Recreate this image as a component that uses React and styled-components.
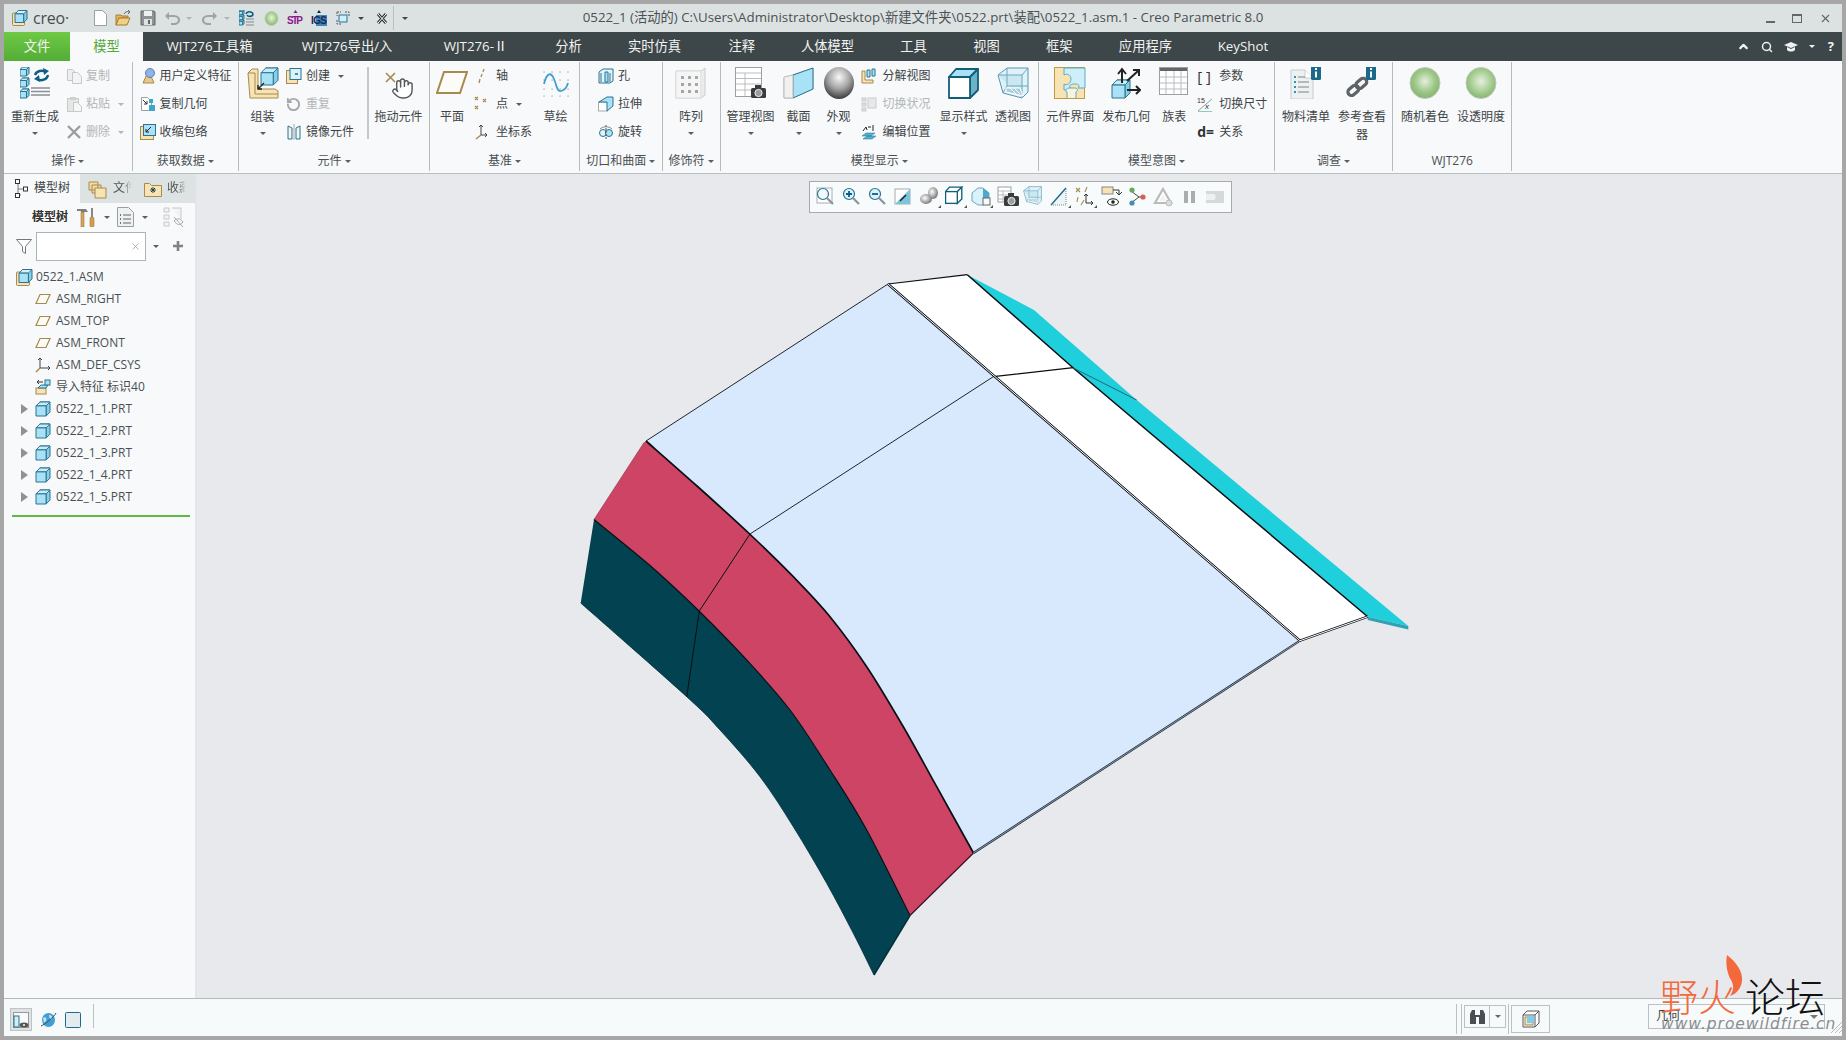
import React from 'react';
import styled, { createGlobalStyle } from 'styled-components';
import { Hand, RotateCcw, Search, X, ChevronUp } from 'lucide-react';

const FONT = '"Open Sans","Noto Sans CJK SC",sans-serif';
const CY = '#a9e2f6', BL = '#2b7390', TN = '#f7e3b3', TL = '#a8894e', DK = '#3e4446';

const Global = createGlobalStyle`
  html, body { margin: 0; background: #a6a6a6; overflow: hidden; }
  #root { width: 1846px; height: 1040px; }
`;

const Win = styled.div`
  position: relative; box-sizing: border-box; margin: 4px 0 0 4px; width: 1838px; height: 1032px;
  display: flex; flex-direction: column; font: 12px/1.2 ${FONT}; color: ${DK}; background: #f7f9fb; overflow: hidden;
`;
/* ---------- title bar ---------- */
const TitleBar = styled.header`
  height: 28px; flex: none; background: #dce2e2; display: grid; grid-template-columns: 1fr auto 1fr; align-items: center;
`;
const Quick = styled.div`display: flex; align-items: center; padding-left: 8px;`;
const Creo = styled.span`font: 16px/1 "Open Sans", ${FONT}; color: #474d4f; margin-left: 5px; width: 36px; white-space: nowrap; letter-spacing: -.2px;`;
const QSlot = styled.span`display: flex; align-items: center; justify-content: center; flex: none; margin-left: ${p => p.$ml}px; width: ${p => p.$w}px;`;
const QSep = styled.span`display: block; width: 1px; height: 24px; background: #b9bfc0;`;
const Title = styled.div`font-size: 13.3px; color: #4a5052; white-space: nowrap;`;
const WinBtns = styled.div`display: flex; justify-content: flex-end; align-items: center; gap: 17px; padding-right: 10px; color: #555;`;
const MinMark = styled.span`display: block; width: 9px; height: 2px; background: #666; margin-top: 8px;`;
const MaxMark = styled.span`display: block; box-sizing: border-box; width: 10px; height: 9px; border: 1px solid #666; border-top-width: 2px;`;

/* ---------- tabs ---------- */
const TabBar = styled.nav`height: 29px; flex: none; background: #3d4648; display: flex; align-items: stretch;`;
const Tab = styled.div`
  flex: none; width: ${p => p.$w}px; display: flex; align-items: center; justify-content: center; font-size: 13.3px; white-space: nowrap;
  color: ${p => p.$kind === 'active' ? '#57a83a' : '#f2f4f4'};
  background: ${p => p.$kind === 'file' ? 'linear-gradient(#6fc944,#53ad37)' : p.$kind === 'active' ? '#f7f9fb' : 'transparent'};
`;
const TabTools = styled.div`margin-left: auto; display: flex; align-items: center; gap: 11px; padding-right: 8px; color: #f0f2f2;`;
const Help = styled.span`font-weight: 700; font-size: 13px; margin-left: 2px;`;

/* ---------- ribbon ---------- */
const Ribbon = styled.section`box-sizing: border-box; height: 113px; flex: none; display: flex; padding: 1px 0 2px; background: #f7f9fb; border-bottom: 1px solid #b8bfc0;`;
const Group = styled.div`box-sizing: border-box; flex: none; width: ${p => p.$w}px; display: flex; flex-direction: column; border-right: 1px solid #b7bbbc;`;
const GroupBody = styled.div`height: 90px; display: flex; padding-left: ${p => p.$pl || 0}px;`;
const GroupFoot = styled.div`height: 18px; display: flex; align-items: center; justify-content: center; gap: 3px; white-space: nowrap; color: #4a5052;`;
const Big = styled.div`flex: none; box-sizing: content-box; width: ${p => p.$w}px; display: flex; flex-direction: column; align-items: center; ${p => p.$sep ? 'border-left: 2px solid #c4c8c9; margin-top: 5px; height: 72px;' : ''}`;
const BigIcon = styled.div`height: ${p => p.$h || 41}px; padding-top: 5px; flex: none; display: flex; justify-content: center;`;
const BigLabel = styled.div`line-height: 18px; text-align: center; white-space: nowrap;`;
const SmallCol = styled.div`flex: none; width: ${p => p.$w}px; display: flex; flex-direction: column;`;
const SmallRow = styled.div`height: 28px; display: flex; align-items: center; white-space: nowrap; color: ${p => p.$off ? '#b2b6b8' : DK};`;
const SmallIcon = styled.span`flex: none; width: ${p => p.$w || 20}px; display: flex; align-items: center;`;
const Caret = styled.span`
  display: inline-block; flex: none; width: 0; height: 0; border-left: ${p => p.$s || 3.5}px solid transparent; border-right: ${p => p.$s || 3.5}px solid transparent;
  border-top: ${p => p.$s || 3.5}px solid ${p => p.$c || '#5a6062'}; margin-left: ${p => p.$ml || 0}px;
`;
const BigCaret = styled(Caret)`margin-top: 6px;`;
const SymText = styled.span`font-weight: ${p => p.$wt || 700}; font-size: ${p => p.$s || 13}px; color: #333; line-height: 1;`;

/* ---------- main ---------- */
const Main = styled.main`flex: 1; display: flex; min-height: 0;`;
const Side = styled.aside`box-sizing: border-box; flex: none; width: 193px; background: #f7f9fa; border-right: 2px solid #e3e6e7; display: flex; flex-direction: column;`;
const SideTabs = styled.div`height: 29px; flex: none; display: flex; background: #dde3e3;`;
const SideTab = styled.div`
  box-sizing: border-box; flex: none; width: ${p => p.$w}px; display: flex; align-items: center; gap: 5px; padding-left: ${p => p.$pl}px; white-space: nowrap;
  background: ${p => p.$on ? '#f7f9fa' : 'transparent'};
`;
const FadeText = styled.span`color: #555; -webkit-mask-image: linear-gradient(90deg,#000 50%,transparent 95%); mask-image: linear-gradient(90deg,#000 50%,transparent 95%); width: 20px;`;
const SideTools = styled.div`height: 28px; flex: none; display: flex; align-items: center; padding-left: 28px; gap: 7px; font-weight: 500;`;
const ToolLabel = styled.span`width: 38px; color: #333; text-shadow: 0 0 .4px #555;`;
const HideIcon = styled.svg`margin-left: 8px;`;
const FilterRow = styled.div`height: 30px; flex: none; display: flex; align-items: center; padding-left: 12px;`;
const FilterBox = styled.div`box-sizing: border-box; width: 110px; height: 29px; margin-left: 4px; background: #fff; border: 1px solid #aeb3b5; display: flex; align-items: center; justify-content: flex-end; padding-right: 4px; color: #999;`;
const PlusIcon = styled.svg`margin-left: 13px;`;
const Tree = styled.div`padding-top: 5px;`;
const Row = styled.div`height: 22px; display: flex; align-items: center; padding-left: ${p => p.$in}px; color: #4a5052; white-space: nowrap;`;
const Expand = styled.span`flex: none; width: 0; height: 0; border-left: 7px solid #8d9294; border-top: 5px solid transparent; border-bottom: 5px solid transparent; margin-right: 7px;`;
const RowIcon = styled.span`flex: none; display: flex; width: ${p => p.$w}px; margin-right: ${p => p.$g}px;`;
const GreenRule = styled.div`height: 2px; width: 178px; margin: 7px 0 0 8px; background: #62b845;`;

const Canvas = styled.div`position: relative; flex: 1; background: #e8e9ed; overflow: hidden;`;
const Model = styled.svg`position: absolute; inset: 0; width: 100%; height: 100%;`;
const Float = styled.div`
  position: absolute; top: 7px; left: 612px; box-sizing: border-box; height: 32px; display: flex; align-items: center; padding: 0 3px 0 4px; gap: 2px;
  background: #f8fbfc; border: 1px solid #a9a9a9;
`;
const FloatBtn = styled.span`flex: none; width: 24px; height: 24px; display: flex; align-items: center; justify-content: center;`;

/* ---------- status ---------- */
const Status = styled.footer`box-sizing: border-box; height: 38px; flex: none; background: #f7fafb; border-top: 1px solid #b5b9ba; display: flex; align-items: flex-start; padding: 5px 0 0 6px;`;
const StatBtn = styled.span`box-sizing: border-box; flex: none; display: flex; align-items: center; justify-content: center; width: ${p => p.$w}px; height: ${p => p.$h || 24}px; margin: ${p => p.$mt || 4}px 0 0 ${p => p.$ml || 0}px; ${p => p.$on ? 'background:#dfe2e3;border:1px solid #bfc3c4;' : ''} ${p => p.$box ? 'border:1px solid #bcc0c2;' : ''}`;
const VLine = styled.span`flex: none; display: block; width: 1px; height: ${p => p.$h || 30}px; margin-left: ${p => p.$ml}px; background: #bcc0c2;`;
const FindIcon = styled.span`flex: 1; display: flex; align-items: center; justify-content: center;`;
const FindSplit = styled.span`flex: none; align-self: stretch; width: 15px; border-left: 1px solid #bcc0c2; display: flex; align-items: center; justify-content: center;`;
const GeoSelect = styled.div`box-sizing: border-box; flex: none; width: 177px; height: 25px; margin-left: 98px; border: 1px solid #bcc0c2; background: #f7fafb; display: flex; align-items: center; justify-content: space-between; padding: 0 6px 0 7px;`;
const Grip = styled.svg`flex: none; margin: 17px 0 0 6px;`;

/* ---------- watermark ---------- */
const Mark = styled.div`position: absolute; left: 1656px; top: 951px; width: 175px; height: 84px; pointer-events: none;`;
const MarkLine = styled.div`position: absolute; top: 18px; left: 0; display: flex; align-items: center; font-family: "Noto Sans CJK SC",sans-serif; font-weight: 300; line-height: 44px; white-space: nowrap;`;
const MarkRed = styled.span`color: #f3693c; font-size: 38px;`;
const MarkDark = styled.span`color: #111; font-size: 40px; margin-left: 9px;`;
const MarkFlame = styled.svg`position: absolute; left: 62px; top: 0;`;
const MarkUrl = styled.div`position: absolute; left: 1px; top: 60px; font: italic 15.5px/18px "DejaVu Sans",sans-serif; letter-spacing: .95px; color: #8b8d90; white-space: nowrap;`;

/* ---------- shared drawing bits ---------- */
const I = ({ s = 16, h, children }) => <svg width={s} height={h || s} viewBox={`0 0 ${s} ${h || s}`}>{children}</svg>;
const Cube = ({ x = 0, y = 0, s = 14, f = '#c6ecf9', l = BL, front = CY, dark = '#86cfe8' }) => {
  const d = s * .28, w = s - d;
  return <g strokeWidth="1" stroke={l} strokeLinejoin="round">
    <path d={`M${x + d} ${y}h${w}v${w}l${-d} ${d}V${y + d}z`} fill={dark} />
    <path d={`M${x} ${y + d}l${d} ${-d}h${w}l${-d} ${d}z`} fill={f} />
    <rect x={x} y={y + d} width={w} height={w} fill={front} />
  </g>;
};
const TanCube = ({ s = 16 }) => <I s={s}>
  <rect x=".5" y="3" width={s - 4} height={s - 3.5} fill={TN} stroke={TL} rx="1" />
  <Cube x={3} y={.5} s={s - 4} f="#d6f1fb" front={CY} />
</I>;
const Doc = ({ x = 1, y = 1, w = 10, h = 13, f = '#fff', l = '#9a9fa1' }) => <path d={`M${x + .5} ${y + .5}h${w - 4}l4 4v${h - 4}h${-w}z`} fill={f} stroke={l} />;
const Ball = ({ id, a, b, c, s = 32 }) => <I s={s}>
  <defs><radialGradient id={id} cx=".5" cy=".45" r=".6"><stop offset="0" stopColor={a} /><stop offset=".55" stopColor={b} /><stop offset="1" stopColor={c} /></radialGradient></defs>
  <ellipse cx={s / 2} cy={s / 2} rx={s / 2 - 1} ry={s / 2 - .5} fill={`url(#${id})`} stroke="#c0c8bc" />
</I>;
const Info = ({ x, y }) => <g><rect x={x} y={y} width="10" height="14" rx="1.5" fill="#1c6a8b" /><rect x={x + 4} y={y + 2} width="2" height="2" fill="#fff" /><rect x={x + 4} y={y + 5.5} width="2" height="6" fill="#fff" /></g>;

/* ---------- big ribbon icons ---------- */
const IRegen = () => <I s={30} h={32}>
  <Cube x={0} y={0} s={9} /><Cube x={0} y={11} s={9} /><Cube x={0} y={22} s={9} />
  <path d="M15 8a7 6 0 0 1 11-3" fill="none" stroke="#0e5f83" strokeWidth="2.4" /><path d="M23 1l6 3-5 4z" fill="#0e5f83" />
  <path d="M28 8a7 6 0 0 1-11 4" fill="none" stroke="#0e5f83" strokeWidth="2.4" /><path d="M20 15l-6-3 5-4z" fill="#0e5f83" />
  <path d="M11 21h19M11 24.5h19M11 28h19" stroke="#8a8f91" strokeWidth="1.6" />
</I>;
const IAssemble = () => <I s={32}>
  <path d="M1 6l4-4h6v20h17l3 2v7H3z" fill={TN} stroke={TL} /><path d="M1 6h7v21h23" fill="none" stroke={TL} />
  <Cube x={14} y={1} s={17} />
  <path d="M17 16l-6 6M11 18v4h4" fill="none" stroke="#222" strokeWidth="1.4" />
</I>;
const IHand = () => <I s={28}>
  <Hand x={6} y={5} width={23} height={23} stroke="#55595b" strokeWidth={1.5} fill="#fff" />
  <path d="M1 1l9 9M10 1l-9 9" stroke={TL} strokeWidth="1.6" />
</I>;
const IPlane = () => <I s={32}><path d="M8 5h23L24 26H1z" fill="#fbfbf8" stroke={TL} strokeWidth="2" /></I>;
const ISketch = () => <I s={26} h={32}>
  <path d="M1 5h.1M9 5h.1M17 5h.1M25 5h.1M1 13h.1M9 13h.1M17 13h.1M25 13h.1M1 22h.1M9 22h.1M17 22h.1M25 22h.1M1 29h.1M9 29h.1M17 29h.1M25 29h.1" stroke="#777" strokeWidth="1.2" strokeLinecap="round" />
  <path d="M1 17c3-12 7-12 10-5s3 13 7 12 6-4 7-8" fill="none" stroke="#3f9fd0" strokeWidth="1.8" />
</I>;
const IPattern = () => <I s={32}>
  <path d="M1 4h25l4-3v27l-4 3H1z" fill="#ececec" stroke="#ccc" /><rect x="1" y="4" width="25" height="27" fill="#f5f5f5" stroke="#ddd" />
  <path d="M6 9h3v3H6zM13 9h3v3h-3zM20 9h3v3h-3zM6 16h3v3H6zM13 16h3v3h-3zM20 16h3v3h-3zM6 23h3v3H6zM13 23h3v3h-3zM20 23h3v3h-3z" fill="#a3a7a8" />
</I>;
const Cam = ({ x, y }) => <g><rect x={x} y={y + 3} width="15" height="10" rx="1.5" fill="#3a3d3f" /><rect x={x + 4} y={y} width="6" height="4" fill="#3a3d3f" /><circle cx={x + 7.5} cy={y + 8} r="3.6" fill="#9a9ea0" stroke="#eee" /></g>;
const ITableCam = ({ s = 32 }) => <svg width={s} height={s} viewBox="0 0 32 32">
  <rect x=".5" y=".5" width="26" height="29" fill="#fff" stroke="#9a9fa1" />
  <path d="M1 6h25M1 11.500h25M1 17h25M1 23h25M10 6v23" stroke="#b9bdbf" />
  <Cam x={16} y={18} />
</svg>;
const ISection = () => <I s={32}>
  <path d="M1 11l29-10v21l-20 9H1z" fill="#eaeaea" stroke="#bbb" />
  <path d="M10 8L30 1v21L10 31z" fill={CY} stroke={BL} /><path d="M1 10l9-2v23H1z" fill="#f1f1f1" stroke="#bbb" />
</I>;
const ISphere = () => <I s={32}>
  <defs><radialGradient id="sph" cx=".5" cy=".32" r=".72"><stop offset="0" stopColor="#f8f8f8" /><stop offset=".5" stopColor="#a4a4a4" /><stop offset="1" stopColor="#2e2e2e" /></radialGradient></defs>
  <ellipse cx="16" cy="16" rx="15" ry="16" fill="url(#sph)" />
</I>;
const IDisplay = ({ s = 32 }) => <svg width={s} height={s} viewBox="0 0 32 32" strokeLinejoin="round">
  <path d="M8 2h22L22 10H1z" fill={CY} stroke="#115e78" strokeWidth="1.8" /><path d="M22 10l8-8v21l-8 8z" fill="#6bb2cb" stroke="#115e78" strokeWidth="1.8" />
  <rect x="1" y="10" width="21" height="21" fill="#fff" stroke="#115e78" strokeWidth="1.8" />
</svg>;
const IPersp = ({ s = 32 }) => <svg width={s} height={s} viewBox="0 0 32 32" strokeLinejoin="round">
  <path d="M1 8L10 1h21v24l-6 6L6 26z" fill="#dff2f9" stroke="#5a95ad" /><path d="M1 8h24v23z" fill="#c0e4f0" opacity=".7" />
  <path d="M10 1v18M10 19l-4 7M10 19h21M25 8L31 1M1 8h24v23" fill="none" stroke="#6fa6bc" />
  <path d="M9 21h14l3 8-17-4zM13 21l7 7M17 21l6 6" fill="#a8cfde" stroke="#fff" />
</svg>;
const IPuzzle = () => <I s={32}>
  <rect x=".5" y=".5" width="30" height="31" fill={TN} stroke="#c39a3c" />
  <path d="M16 1h15v20h-7c2-2 1-4-3-4s-6 1-5 3 2 2 1 3H10v-6c3 2 7-1 7-5s-4-6-7-4V1z" fill="#cdeffa" stroke="#5fa9c0" />
  <path d="M13 31v-6c-2-1-1-4 2-4h6c3 0 3 3 1 4v6" fill="#f7f3e0" stroke="#5fa9c0" />
</I>;
const IPublish = () => <I s={30} h={32}>
  <Cube x={1} y={13} s={18} /><path d="M11 16V3M7 7l4-5 4 5M16 14L27 4M22 3h6v6M16 23h12M25 19l4 4-4 4" fill="none" stroke="#222" strokeWidth="2" />
</I>;
const IFamily = () => <I s={30} h={28}>
  <rect x=".5" y=".5" width="28" height="27" fill="#fff" stroke="#9a9fa1" /><rect x="1" y="1" width="27" height="3" fill="#666" />
  <path d="M1 10h27M1 16h27M1 22h27M7 4v23M15 4v23M22 4v23" stroke="#b9bdbf" />
</I>;
const IBom = () => <I s={32}>
  <path d="M1 3h14l8 8v21H1z" fill="#eef1f2" stroke="#c8cccd" /><path d="M15 3v8h8" fill="#fff" stroke="#c8cccd" />
  <path d="M8 10h7M8 15h11M8 20h11M8 25h11" stroke="#7d8486" /><path d="M4 10h2M4 15h2M4 20h2M4 25h2" stroke="#219bb4" strokeWidth="2" />
  <Info x={21} y={-1} />
</I>;
const IRef = () => <I s={32}>
  <g fill="none" stroke="#5f6365" strokeWidth="3.2"><rect x="1" y="20" width="12" height="7" rx="3.5" transform="rotate(-40 7 23)" /><rect x="9" y="13" width="12" height="7" rx="3.5" transform="rotate(-40 15 16)" /></g>
  <path d="M20 11l5-4" stroke="#aaa" strokeWidth="3" /><Info x={20} y={-1} />
</I>;

/* ---------- small ribbon icons ---------- */
const ICopy = () => <I><Doc x={1} y={1} w={9} h={11} f="#eee" l="#c6c9ca" /><Doc x={6} y={4} w={9} h={11} f="#f4f4f4" l="#c6c9ca" /></I>;
const IPaste = () => <I><rect x="1.5" y="2.500" width="11" height="13" fill="#e6e6e6" stroke="#c6c9ca" /><rect x="4" y="1" width="6" height="3" fill="#cfcfcf" /><Doc x={7} y={6} w={8} h={9} f="#f6f6f6" l="#c6c9ca" /></I>;
const IDelete = () => <I><path d="M2 2l12 12M14 2L2 14" stroke="#9a9ea0" strokeWidth="2.4" /></I>;
const IUdf = () => <I><path d="M3 15l4-9h3l4 9z" fill="#e6c98a" stroke={TL} /><circle cx="10" cy="5" r="4.5" fill="#8fb3e8" stroke="#5a7eb6" /></I>;
const ICopyGeom = () => <I><Doc x={1} y={1} w={10} h={13} /><path d="M3 4l4 4M7 5v3H4" stroke="#333" fill="none" /><rect x="9" y="9" width="6" height="6" fill="#3fa6cb" /><rect x="9" y="3" width="4" height="4" fill="#3fa6cb" /></I>;
const IShrink = () => <I><rect x=".5" y="2.500" width="13" height="13" fill={TN} stroke={TL} /><rect x="3.500" y=".5" width="12" height="11" fill={CY} stroke={BL} /><path d="M11 3L6 8M6 5v3h3" stroke="#222" fill="none" /></I>;
const ICreate = () => <I><rect x=".5" y="2.500" width="11" height="13" fill={TN} stroke={TL} /><rect x="4" y=".5" width="11" height="11" fill="#d9f2fb" stroke={BL} /><path d="M9 5h3v2H9z" fill="#3f8fb0" /></I>;
const IMirror = () => <I><path d="M2 2l4 2v11H2zM14 2l-4 2v11h4z" fill="#f3f3f3" stroke={BL} /><path d="M8 0v16" stroke="#aaa" /></I>;
const IAxis = () => <I><path d="M10 1l-1 3M8 6l-1 3M6 11l-1 4" stroke={TL} strokeWidth="1.3" /></I>;
const IPoint = () => <I><path d="M1 1l3 3M4 1L1 4M9 3l3 3M12 3L9 6M1 10l3 3M4 10l-3 3" stroke={TL} strokeWidth="1.2" /></I>;
const ICsys = () => <I><path d="M7 1v10l6 0M5 3l2-2 2 2M11 9l2 2-2 2" fill="none" stroke="#444" /><path d="M7 11l-5 4" stroke={TL} strokeWidth="1.5" /></I>;
const IHole = () => <I><path d="M1 4l4-3h10v12l-3 2H1z" fill="#e2f3fa" stroke={BL} /><path d="M7 4h3v10H7z" fill={CY} stroke={BL} /><path d="M3 5v9M12 5v9" stroke={BL} /></I>;
const IExtrude = () => <I><rect x=".5" y="6" width="9" height="9" fill="#fff" stroke="#aaa" /><path d="M1 6l8-5h6v9l-6 5V6z" fill={CY} stroke={BL} /></I>;
const IRevolve = () => <I><circle cx="5" cy="9" r="3.5" fill="#e2f3fa" stroke={BL} /><circle cx="11" cy="9" r="3.5" fill={CY} stroke={BL} /><path d="M8 1v14" stroke="#555" strokeDasharray="2 1" /><path d="M2 5c3-3 9-3 12 0" fill="none" stroke="#888" /></I>;
const IExplode = () => <I><path d="M1 3h3v9h8v3H1z" fill={TN} stroke={TL} /><path d="M6 2h3v7H6zM11 1h3v7h-3z" fill={CY} stroke={BL} /></I>;
const IToggle = () => <I><rect x="1" y="2" width="4" height="3" fill="#ddd" stroke="#ccc" /><rect x="1" y="7" width="4" height="3" fill="#ddd" stroke="#ccc" /><rect x="1" y="12" width="4" height="3" fill="#ddd" stroke="#ccc" /><rect x="7" y="2" width="8" height="10" fill="#e8e8e8" stroke="#ccc" /></I>;
const IEditPos = () => <I><path d="M2 7l3-4 1 3M7 3h3M12 1v6" stroke="#222" fill="none" /><path d="M1 12l4-3h9l-4 3zM2 15l4-3h9l-4 3z" fill="#4eb3cf" stroke="#2b7390" strokeWidth=".5" /></I>;
const IDims = () => <I><text x="0" y="7" fontSize="7" fill="#333" fontFamily="Liberation Sans">15</text><path d="M1 15L15 3" stroke="#999" /><text x="8" y="13" fontSize="8" fontStyle="italic" fill="#333" fontFamily="Liberation Sans">x</text><path d="M1 15.500h14" stroke="#8cb" /></I>;

/* ---------- quick access ---------- */
const QNew = () => <I s={16}><Doc x={2} y={0} w={12} h={15} /></I>;
const QOpen = () => <I s={16}><path d="M1 5h5l1 1h6v2H4l-2 7h-1z" fill="#e6b45c" stroke="#a47c32" /><path d="M4 8h11l-3 7H1z" fill="#f3cf83" stroke="#a47c32" /><path d="M9 4c1-2 3-3 5-2M13 0l2 2-2 2" fill="none" stroke="#666" /></I>;
const QSave = () => <I s={16}><path d="M1 1h13l1 1v13H1z" fill="#8d9295" stroke="#666" /><rect x="4" y="1" width="8" height="5" fill="#eef1f2" /><rect x="4" y="9" width="8" height="6" fill="#dfe2e3" /><rect x="8" y="10" width="2" height="4" fill="#666" /></I>;
const QUndo = ({ flip }) => <svg width="16" height="14" viewBox="0 0 16 14"><g transform={flip ? 'translate(16,0) scale(-1,1)' : ''}><path d="M4 5h6c3 0 5 2 5 4s-2 4-5 4H7" fill="none" stroke="#9ea3a5" strokeWidth="2.2" /><path d="M1 5l4-4v8z" fill="#9ea3a5" /></g></svg>;
const QRegen = () => <I s={16}><Cube x={0} y={0} s={5} /><Cube x={0} y={5} s={5} /><Cube x={0} y={10} s={5} /><path d="M7 4c1-3 6-3 7 0M14 4c0 3-5 3-6 1" fill="none" stroke="#0e5f83" strokeWidth="1.6" /><path d="M7 9h8M7 12h8M7 15h8" stroke="#888" /></I>;
const QStp = () => <svg width="16" height="16" viewBox="0 0 16 16"><path d="M8.500 0l-2 3h4z" fill="#8a1a8a" /><text x="0" y="14" fontSize="10" fontWeight="700" fontFamily="Liberation Sans" fill="#8a1a8a" textLength="16">STP</text></svg>;
const QIgs = () => <svg width="16" height="16" viewBox="0 0 16 16"><path d="M8 0l-2 3h4z" fill="#222" /><rect x="5" y="5" width="11" height="11" fill="#3b89b0" /><text x="0" y="14" fontSize="10" fontWeight="700" fontFamily="Liberation Sans" fill="#1b2460" textLength="16">IGS</text></svg>;
const QWin = () => <I s={16}><path d="M2 2h4M2 2v4M2 10v4h4M10 2h4v4" stroke="#555" fill="none" strokeDasharray="2 1" /><rect x="4" y="5" width="8" height="7" fill="#cdeffa" stroke={BL} /></I>;
const QClose = () => <svg width="12" height="11" viewBox="0 0 12 11"><path d="M2 1l8 9M10 1l-8 9" stroke="#333" strokeWidth="3" /><path d="M2 1l8 9M10 1l-8 9" stroke="#fff" strokeWidth="1" /></svg>;

const quick = [
  [<QNew />, 100, 16], [<QOpen />, 122.5, 16], [<QSave />, 147.5, 16], [<QUndo />, 172, 16], [<Caret $c="#b0b4b6" />, 189, 7], [<QUndo flip />, 209.5, 16], [<Caret $c="#b0b4b6" />, 227, 7],
  [<QRegen />, 246.500, 16], [<Ball id="qb" a="#e9f4df" b="#a8d28c" c="#7fae6a" s={15} />, 271, 15], [<QStp />, 294.5, 16], [<QIgs />, 319, 16], [<QWin />, 342.5, 16], [<Caret $c="#444" />, 361, 7], [<QClose />, 381.5, 12], [<QSep />, 393.5, 1], [<Caret $c="#444" />, 405, 7],
];

/* ---------- floating toolbar ---------- */
const Corner = () => <path d="M22 19v3h-3z" fill="#555" />;
const Lens = ({ sym, f = '#f4fbfe' }) => <g><circle cx="8" cy="8" r="5.500" fill={f} stroke={BL} strokeWidth="1.2" /><path d="M12 12l6 6" stroke="#8a9498" strokeWidth="2.2" />{sym}</g>;
const F = ({ children }) => <svg width="22" height="22" viewBox="0 0 22 22">{children}</svg>;
const floats = [
  <F><rect x="2" y="2" width="15" height="15" fill="#fff" stroke="#a8adaf" /><Lens /></F>,
  <F><Lens f="#d9f2fb" sym={<path d="M5 8h6M8 5v6" stroke="#0e5f83" strokeWidth="1.8" />} /></F>,
  <F><Lens f="#d9f2fb" sym={<path d="M5 8h6" stroke="#0e5f83" strokeWidth="1.8" />} /></F>,
  <F><rect x="2" y="3" width="15" height="15" fill="#fff" stroke="#aaa" /><path d="M2 18L17 3v15z" fill="#7cc3dc" /><path d="M7 15l6-6" stroke="#222" strokeWidth="1.4" /></F>,
  <F><defs><radialGradient id="sm" cx=".4" cy=".4" r=".7"><stop offset="0" stopColor="#fff" /><stop offset="1" stopColor="#666" /></radialGradient></defs><ellipse cx="7" cy="13" rx="6" ry="5" fill="url(#sm)" /><ellipse cx="14" cy="7" rx="5" ry="6" fill="url(#sm)" /><Corner /></F>,
  <F><g transform="scale(.56)"><path d="M8 2h22L22 10H1zM22 10l8-8v21l-8 8z" fill="#fff" stroke="#115e78" strokeWidth="2.400" /><rect x="1" y="10" width="21" height="21" fill="#fff" stroke="#115e78" strokeWidth="2.400" /></g><Corner /></F>,
  <F><path d="M1 7l6-5h5l6 5v8l-6 4H7l-6-4z" fill="#d9f2fb" stroke="#6fa6bc" /><path d="M12 2l6 5v6h-6z" fill="#4fa8c9" /><rect x="12" y="12" width="7" height="7" fill="#f7f9fb" stroke="#666" /><Corner /></F>,
  <F><rect x="1" y="1" width="13" height="15" fill="#fff" stroke="#9a9fa1" /><path d="M1 5h13M1 9h13M1 13h13M6 5v11" stroke="#bbb" /><Cam x={7} y={7} /></F>,
  <F><IPersp s={19} /></F>,
  <F><path d="M2 19L17 2v17z" fill="#eef3f5" /><path d="M2 19L17 2" stroke="#1c6a8b" strokeWidth="1.4" /><path d="M2 19h15V2" stroke="#888" strokeDasharray="1 1" fill="none" /><Corner /></F>,
  <F><path d="M1 2l4 4M5 2L1 6M12 1l-2 5M3 11l-1 5M6 19l3-5" stroke={TL} fill="none" strokeWidth="1.1" /><path d="M11 8v9h7M9 10l2-2 2 2M16 15l2 2-2 2" stroke="#333" fill="none" /><Corner /></F>,
  <F><rect x="1" y="1" width="11" height="7" fill="#f7e3b3" stroke="#888" /><path d="M12 4h6v4M15 6l3 3 3-3" stroke="#333" fill="none" /><ellipse cx="12" cy="16" rx="5.500" ry="3.200" fill="#fff" stroke="#222" /><circle cx="12" cy="16" r="1.800" fill="#222" /></F>,
  <F><path d="M4 5l8 6M12 11l-8 6M12 11h6" stroke="#444" /><circle cx="5" cy="4" r="2.600" fill="#69a85a" /><circle cx="5" cy="17" r="2.600" fill="#3f8fb0" /><circle cx="16" cy="11" r="2.600" fill="#d65f57" /></F>,
  <F><path d="M10 3l8 14H2z" fill="#fff" stroke="#bbb" strokeWidth="2.200" /><path d="M10 8l4 7H6z" fill="#f3f3f3" /><circle cx="16" cy="17" r="3" fill="#ddd" stroke="#bbb" /></F>,
  <F><path d="M5 5h4v12H5zM12 5h4v12h-4z" fill="#a9adaf" /></F>,
  <F><path d="M1 5h18v12H1z" fill="#d6d8d9" /><path d="M1 8h8c2 0 2 6 0 6H1z" fill="#eef0f1" /></F>,
];

/* ---------- data ---------- */
const tabs = [['模型', 73, 'active'], ['WJT276工具箱', 133], ['WJT276导出/入', 142], ['WJT276-Ⅱ', 115], ['分析', 71], ['实时仿真', 101], ['注释', 73.4], ['人体模型', 98.4], ['工具', 73.6], ['视图', 72.4], ['框架', 73.2], ['应用程序', 99], ['KeyShot', 96]];

const BigBtn = ({ w, icon, label, caret, sep, iconH }) => <Big $w={w} $sep={sep}>
  <BigIcon $h={iconH}>{icon}</BigIcon><BigLabel>{label}</BigLabel>{caret && <BigCaret />}
</Big>;
const Small = ({ icon, label, off, caret, iw }) => <SmallRow $off={off}><SmallIcon $w={iw}>{icon}</SmallIcon>{label}{caret && <Caret $ml={8} $c={off ? '#b2b6b8' : '#5a6062'} />}</SmallRow>;
const Foot = ({ children, nocaret }) => <GroupFoot>{children}{!nocaret && <Caret />}</GroupFoot>;

const treeItems = ['0522_1_1.PRT', '0522_1_2.PRT', '0522_1_3.PRT', '0522_1_4.PRT', '0522_1_5.PRT'];
const IPlaneT = () => <I s={16}><path d="M5 3.500h10L11 12.500H1z" fill="#fbfbf6" stroke={TL} strokeWidth="1.2" /></I>;
const ICsysT = () => <I s={16}><path d="M5 1v10h10M3 3l2-2 2 2M13 9l2 2-2 2" fill="none" stroke="#444" /><path d="M5 11l-4 4" stroke={TL} strokeWidth="1.500" /></I>;
const IImport = () => <I s={16}><rect x="1" y="9" width="10" height="6" fill={TN} stroke={TL} /><path d="M3 9l3-3h7l-2 3z" fill={CY} stroke={BL} /><rect x="10" y="1" width="5" height="5" fill={CY} stroke={BL} /><path d="M2 3h6M4 1L2 3l2 2" stroke="#333" fill="none" /></I>;
const IPart = () => <I s={16}><Cube x={1} y={1} s={14} /></I>;

/* ---------- model drawing ---------- */
const smooth = (pts) => {
  let d = `M${pts[0][0]} ${pts[0][1]}`;
  for (let i = 0; i < pts.length - 1; i++) {
    const p0 = pts[i - 1] || pts[i], p1 = pts[i], p2 = pts[i + 1], p3 = pts[i + 2] || p2;
    d += `C${(p1[0] + (p2[0] - p0[0]) / 6).toFixed(1)} ${(p1[1] + (p2[1] - p0[1]) / 6).toFixed(1)} ${(p2[0] - (p3[0] - p1[0]) / 6).toFixed(1)} ${(p2[1] - (p3[1] - p1[1]) / 6).toFixed(1)} ${p2[0]} ${p2[1]}`;
  }
  return d;
};
const edgeA = [[646, 441], [697, 486], [750.7, 535], [793.3, 576.7], [830, 616.7], [866.7, 666.7], [903.3, 726.7], [936.7, 786.7], [973.5, 853]];
const edgeB = [[594, 519.5], [650, 565.5], [699, 611], [746.7, 660], [790, 710], [830, 770], [866.7, 830], [910, 915.5]];
const edgeC = [[580.7, 603], [686.7, 696.7], [720, 730], [760, 776.7], [793.3, 826.7], [826.7, 883.3], [853.3, 933.3], [874, 975]];
const rev = (a) => a.slice().reverse();
const smoothCont = (a) => smooth(a).replace(/^M[^C]*/, '');

const ModelView = () => <Model>
  <g transform="translate(-197,-174)" strokeLinejoin="round">
    <path d={`M646 441L888 284L1300 640.700L973.500 853${smoothCont(rev(edgeA))}Z`} fill="#d8e8fd" />
    <path d="M888 284L967.300 274.700L1073.300 368L1367.700 616.700L1300 640.700Z" fill="#fff" />
    <path d="M967.300 274.700L1034 310L1136.700 400L1408.300 626L1367.700 616.700L1073.300 368Z" fill="#1fcfdc" />
    <path d="M1367.700 616.700L1408.300 626L1408.300 629.500L1367.700 620Z" fill="#2fa3b3" />
    <path d={`M644 442.500L594 519.500${smoothCont(edgeB)}L973.500 853${smoothCont(rev(edgeA))}Z`} fill="#ce4464" />
    <path d={`M594 519.500L580.700 603${smoothCont(edgeC)}L910 915.500${smoothCont(rev(edgeB))}Z`} fill="#034251" />
    <g fill="none" stroke="#0a0f14">
      <path d="M646 441L888 284" strokeWidth=".9" />
      <path d="M750 534L993.300 376.700" strokeWidth=".9" />
      <path d="M888 284L967.300 274.700M993.300 376.700L1073.300 367.700" strokeWidth="1.200" />
      <path d="M967.300 274.700L1073.300 368L1367.700 616.700" strokeWidth="1.500" />
      <path d="M1073.300 368L1136.700 400" stroke="#1a6a78" strokeWidth="1" />
      <path d={smooth(edgeA)} strokeWidth="1.700" />
      <path d={smooth(edgeB)} strokeWidth="1.200" />
      <path d="M750 534L699.300 611L686.700 697" strokeWidth="1" />
      <path d="M644 442.500L594 519.500" stroke="#8d3048" strokeWidth=".6" />
      <path d="M910 915.500L973.500 853" stroke="#3a1020" strokeWidth="1.200" />
      <path d="M874 975L910 915.500" stroke="#02303c" strokeWidth="1.500" />
      <path d={smooth(edgeC)} stroke="#02303c" strokeWidth=".8" />
      <path d="M888 284L1300 640.700L1367.700 616.700" strokeWidth="2.400" />
      <path d="M973.500 853L1300 640.700" stroke="#20303c" strokeWidth="2.200" />
      <path d="M888 284L1300 640.700L1367.700 616.700" stroke="#fff" strokeWidth="1" />
      <path d="M973.500 853L1300 640.700" stroke="#b8c6d8" strokeWidth=".7" />
    </g>
  </g>
</Model>;

export default function App() {
  return <>
    <Global />
    <Win>
      <TitleBar>
        <Quick>
          <TanCube />
          <Creo>creo&#183;</Creo>
          {quick.map(([el, c, w], i) => {
            const left = c - w / 2;
            const prev = i ? quick[i - 1][1] + quick[i - 1][2] / 2 : 69;
            return <QSlot key={i} $ml={left - prev} $w={w}>{el}</QSlot>;
          })}
        </Quick>
        <Title>0522_1 (活动的) C:\Users\Administrator\Desktop\新建文件夹\0522.prt\装配\0522_1.asm.1 - Creo Parametric 8.0</Title>
        <WinBtns><MinMark /><MaxMark /><X size={13} strokeWidth={2} color="#666" /></WinBtns>
      </TitleBar>

      <TabBar>
        <Tab $w={66} $kind="file">文件</Tab>
        {tabs.map(([t, w, k]) => <Tab key={t} $w={w} $kind={k}>{t}</Tab>)}
        <TabTools>
          <ChevronUp size={13} strokeWidth={4} />
          <Search size={12} strokeWidth={3} />
          <svg width="14" height="12" viewBox="0 0 14 12"><path d="M7 1l7 3-7 3-7-3z" fill="#f0f2f2" /><path d="M3 6v3c2 2 6 2 8 0V6L7 8z" fill="#f0f2f2" /></svg>
          <Caret $c="#f0f2f2" />
          <Help>?</Help>
        </TabTools>
      </TabBar>

      <Ribbon>
        <Group $w={128.5}>
          <GroupBody>
            <BigBtn w={62} icon={<IRegen />} label="重新生成" caret />
            <SmallCol $w={64}>
              <Small off icon={<ICopy />} label="复制" />
              <Small off icon={<IPaste />} label="粘贴" caret />
              <Small off icon={<IDelete />} label="删除" caret />
            </SmallCol>
          </GroupBody>
          <Foot>操作</Foot>
        </Group>
        <Group $w={106.5}>
          <GroupBody $pl={7}>
            <SmallCol $w={98}>
              <Small icon={<IUdf />} label="用户定义特征" />
              <Small icon={<ICopyGeom />} label="复制几何" />
              <Small icon={<IShrink />} label="收缩包络" />
            </SmallCol>
          </GroupBody>
          <Foot>获取数据</Foot>
        </Group>
        <Group $w={191}>
          <GroupBody>
            <BigBtn w={47} icon={<IAssemble />} label="组装" caret />
            <SmallCol $w={81}>
              <Small icon={<ICreate />} label="创建" caret />
              <Small off icon={<RotateCcw size={15} color="#a4a8aa" strokeWidth={3} />} label="重复" />
              <Small icon={<IMirror />} label="镜像元件" />
            </SmallCol>
            <BigBtn w={59} sep iconH={36} icon={<IHand />} label="拖动元件" />
          </GroupBody>
          <Foot>元件</Foot>
        </Group>
        <Group $w={150}>
          <GroupBody>
            <BigBtn w={44} icon={<IPlane />} label="平面" />
            <SmallCol $w={58}>
              <Small iw={22} icon={<IAxis />} label="轴" />
              <Small iw={22} icon={<IPoint />} label="点" caret />
              <Small iw={22} icon={<ICsys />} label="坐标系" />
            </SmallCol>
            <BigBtn w={47} icon={<ISketch />} label="草绘" />
          </GroupBody>
          <Foot>基准</Foot>
        </Group>
        <Group $w={82.5}>
          <GroupBody $pl={18}>
            <SmallCol $w={60}>
              <Small icon={<IHole />} label="孔" />
              <Small icon={<IExtrude />} label="拉伸" />
              <Small icon={<IRevolve />} label="旋转" />
            </SmallCol>
          </GroupBody>
          <Foot>切口和曲面</Foot>
        </Group>
        <Group $w={58}>
          <GroupBody><BigBtn w={57} icon={<IPattern />} label="阵列" caret /></GroupBody>
          <Foot>修饰符</Foot>
        </Group>
        <Group $w={318.7}>
          <GroupBody>
            <BigBtn w={60} icon={<ITableCam />} label="管理视图" caret />
            <BigBtn w={36} icon={<ISection />} label="截面" caret />
            <BigBtn w={44} icon={<ISphere />} label="外观" caret />
            <SmallCol $w={73}>
              <Small iw={22} icon={<IExplode />} label="分解视图" />
              <Small iw={22} off icon={<IToggle />} label="切换状况" />
              <Small iw={22} icon={<IEditPos />} label="编辑位置" />
            </SmallCol>
            <BigBtn w={60} icon={<IDisplay />} label="显示样式" caret />
            <BigBtn w={39} icon={<IPersp />} label="透视图" />
          </GroupBody>
          <Foot>模型显示</Foot>
        </Group>
        <Group $w={235.4}>
          <GroupBody>
            <BigBtn w={62} icon={<IPuzzle />} label="元件界面" />
            <BigBtn w={50} icon={<IPublish />} label="发布几何" />
            <BigBtn w={46} icon={<IFamily />} label="族表" />
            <SmallCol $w={76}>
              <Small iw={22} icon={<SymText $s={15} $wt={400}>[ ]</SymText>} label="参数" />
              <Small iw={22} icon={<IDims />} label="切换尺寸" />
              <Small iw={22} icon={<SymText $s={14}>d=</SymText>} label="关系" />
            </SmallCol>
          </GroupBody>
          <Foot>模型意图</Foot>
        </Group>
        <Group $w={118.9}>
          <GroupBody>
            <BigBtn w={63} icon={<IBom />} label="物料清单" />
            <BigBtn w={49} icon={<IRef />} label={<>参考查看<br />器</>} />
          </GroupBody>
          <Foot>调查</Foot>
        </Group>
        <Group $w={118.4}>
          <GroupBody>
            <BigBtn w={63} icon={<Ball id="gb1" a="#e6efdf" b="#9fc98a" c="#7db067" />} label="随机着色" />
            <BigBtn w={49} icon={<Ball id="gb2" a="#e6efdf" b="#a9cf95" c="#7db067" />} label="设透明度" />
          </GroupBody>
          <Foot nocaret>WJT276</Foot>
        </Group>
      </Ribbon>

      <Main>
        <Side>
          <SideTabs>
            <SideTab $w={76} $pl={11} $on>
              <svg width="14" height="20" viewBox="0 0 14 20"><path d="M3 5v11M3 10h6M3 16h3" stroke="#777" fill="none" /><rect x=".5" y=".5" width="4" height="4" fill="#fff" stroke="#333" /><rect x="8.500" y="8" width="4" height="4" fill="#fff" stroke="#333" /><rect x=".5" y="14.500" width="4" height="4" fill="#fff" stroke="#333" /></svg>
              模型树
            </SideTab>
            <SideTab $w={58} $pl={8}>
              <svg width="20" height="20" viewBox="0 0 20 20"><path d="M1 3h9v8H1zM4 6h9v8H4z" fill="#f3dca4" stroke="#a8894e" /><path d="M7 9h11v10H7z" fill="#f7e3b3" stroke="#a8894e" /></svg>
              <FadeText>文件</FadeText>
            </SideTab>
            <SideTab $w={56} $pl={6}>
              <svg width="18" height="16" viewBox="0 0 18 16"><path d="M.5 2.500h5l2 2h10v11H.5z" fill="#f7e3b3" stroke="#a8894e" /><path d="M9 6v6M6 9h6M7 7l4 4M11 7l-4 4" stroke="#245" /></svg>
              <FadeText>收藏</FadeText>
            </SideTab>
          </SideTabs>
          <SideTools>
            <ToolLabel>模型树</ToolLabel>
            <svg width="18" height="20" viewBox="0 0 18 20"><path d="M0 2h9l2 3H7v1H4V4H0z" fill="#7d8183" /><rect x="4" y="5" width="3" height="15" fill="#d9a45a" stroke="#8a6a3a" strokeWidth=".5" /><rect x="14" y="1" width="2" height="10" fill="#888" /><rect x="13" y="10" width="4" height="10" rx="1.500" fill="#d9a040" stroke="#8a6a3a" strokeWidth=".5" /></svg>
            <Caret $ml={2} />
            <svg width="17" height="20" viewBox="0 0 17 20"><path d="M.5.5h11l5 5v14H.5z" fill="#eef1f2" stroke="#9a9fa1" /><path d="M3 8h1M3 12h1M3 16h1" stroke="#444" strokeWidth="1.500" /><path d="M6 8h8M6 12h8M6 16h8" stroke="#666" /></svg>
            <Caret $ml={1} />
            <HideIcon width="21" height="20" viewBox="0 0 21 20"><path d="M1 1h5v4H1zM1 8h5v4H1zM1 15h5v4H1zM9 1h9v11" fill="#f3f3f3" stroke="#c6c9ca" /><path d="M11 14c3-3 6-3 9 1-3 4-6 3-9-1zM11 10l9 10" fill="none" stroke="#a4a8aa" /></HideIcon>
          </SideTools>
          <FilterRow>
            <svg width="16" height="16" viewBox="0 0 16 16"><path d="M.5 1.500h15l-6 7v7l-3-2v-5z" fill="#fff" stroke="#777" /></svg>
            <FilterBox><X size={11} strokeWidth={1.6} /></FilterBox>
            <Caret $ml={7} />
            <PlusIcon width="12" height="12" viewBox="0 0 12 12"><path d="M6 1v10M1 6h10" stroke="#7e8385" strokeWidth="2.600" /></PlusIcon>
          </FilterRow>
          <Tree>
            <Row $in={12}><RowIcon $w={17} $g={3}><TanCube s={17} /></RowIcon>0522_1.ASM</Row>
            <Row $in={31}><RowIcon $w={16} $g={5}><IPlaneT /></RowIcon>ASM_RIGHT</Row>
            <Row $in={31}><RowIcon $w={16} $g={5}><IPlaneT /></RowIcon>ASM_TOP</Row>
            <Row $in={31}><RowIcon $w={16} $g={5}><IPlaneT /></RowIcon>ASM_FRONT</Row>
            <Row $in={31}><RowIcon $w={16} $g={5}><ICsysT /></RowIcon>ASM_DEF_CSYS</Row>
            <Row $in={31}><RowIcon $w={16} $g={5}><IImport /></RowIcon>导入特征 标识40</Row>
            {treeItems.map(t => <Row key={t} $in={17}><Expand /><RowIcon $w={16} $g={5}><IPart /></RowIcon>{t}</Row>)}
          </Tree>
          <GreenRule />
        </Side>
        <Canvas>
          <ModelView />
          <Float>{floats.map((f, i) => <FloatBtn key={i}>{f}</FloatBtn>)}</Float>
        </Canvas>
      </Main>

      <Status>
        <StatBtn $w={22} $h={23} $on><svg width="16" height="16" viewBox="0 0 16 16"><rect x=".5" y=".5" width="15" height="15" fill="#f7f9fa" stroke="#999" /><rect x="1" y="4" width="5" height="11" fill="#cdeffa" stroke={BL} /><ellipse cx="11" cy="13" rx="4.500" ry="2.500" fill="#555" /><circle cx="11" cy="13" r="1" fill="#fff" /></svg></StatBtn>
        <StatBtn $w={18} $ml={7}><svg width="17" height="16" viewBox="0 0 17 16"><ellipse cx="8.500" cy="8" rx="6.500" ry="7" fill="#3f9fd6" /><path d="M3 6c3-2 4 1 3 3l-2 2zM9 3c3 0 4 2 3 4-2 1-3-2-3-4z" fill="#bfe3f5" /><path d="M1 14C4 13 14 5 16 1" stroke="#444" fill="none" /></svg></StatBtn>
        <StatBtn $w={18} $ml={7}><svg width="16" height="16" viewBox="0 0 16 16"><rect x=".5" y=".5" width="15" height="15" rx="1" fill="#e4ebef" stroke="#1f6b88" /></svg></StatBtn>
        <VLine $ml={11} $h={24} />
        <VLine $ml={1362} />
        <VLine $ml={4} />
        <StatBtn $w={42} $h={23} $ml={2} $mt={1} $box>
          <FindIcon><svg width="17" height="15" viewBox="0 0 17 15"><path d="M1 5l2-4h3v5h5V1h3l2 4v10h-6V8H7v7H1z" fill="#4a4f51" /></svg></FindIcon>
          <FindSplit><Caret $c="#666" /></FindSplit>
        </StatBtn>
        <VLine $ml={2} />
        <StatBtn $w={39} $h={28} $ml={2} $mt={1} $box><svg width="18" height="18" viewBox="0 0 18 18"><path d="M1 5l4-4h12v12l-4 4H1z" fill="#fff" stroke="#555" /><path d="M1 5h12v12M13 5l4-4" fill="none" stroke="#555" /><rect x="3" y="7" width="8" height="8" fill={TN} stroke={TL} /><rect x="5" y="6" width="7" height="7" fill="#7fcdea" /></svg></StatBtn>
        <GeoSelect>几何<Caret $s={4} $c="#777" /></GeoSelect>
        <Grip width="12" height="12" viewBox="0 0 12 12"><path d="M0 12L12 0M4 12l8-8M8 12l4-4" stroke="#b8bcbe" /></Grip>
      </Status>

      <Mark>
        <MarkFlame width="22" height="42" viewBox="0 0 22 42"><path d="M5 0c9 7 16 16 15 26-1 8-6 13-12 15 4-6 4-11 1-16C6 20 3 10 5 0z" fill="#f3693c" /></MarkFlame>
        <MarkLine><MarkRed>野火</MarkRed><MarkDark>论坛</MarkDark></MarkLine>
        <MarkUrl>www.proewildfire.cn</MarkUrl>
      </Mark>
    </Win>
  </>;
}
